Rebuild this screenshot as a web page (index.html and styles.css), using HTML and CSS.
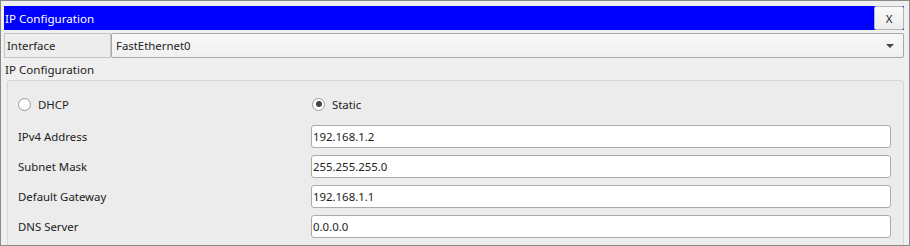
FILE: index.html
```html
<!DOCTYPE html>
<html>
<head>
<meta charset="utf-8">
<link rel="stylesheet" href="styles.css">
</head>
<body>
<div class="window">
  <div class="titlebar">
    <span class="title">IP Configuration</span>
    <button class="close">X</button>
  </div>
  <div class="iface-row">
    <div class="iface-label">Interface</div>
    <div class="select">
      <span>FastEthernet0</span>
      <span class="arrow"></span>
    </div>
  </div>
  <div class="section-label">IP Configuration</div>
  <div class="group">
    <div class="grid">
      <div class="radio-cell"><span class="radio"></span><span>DHCP</span></div>
      <div class="radio-cell static"><span class="radio checked"></span><span>Static</span></div>
      <div class="label">IPv4 Address</div>
      <div class="input">192.168.1.2</div>
      <div class="label">Subnet Mask</div>
      <div class="input">255.255.255.0</div>
      <div class="label">Default Gateway</div>
      <div class="input">192.168.1.1</div>
      <div class="label">DNS Server</div>
      <div class="input">0.0.0.0</div>
    </div>
  </div>
</div>
</body>
</html>
```
FILE: styles.css
```css
html, body {
  margin: 0;
  padding: 0;
  background: #efefef;
}
body {
  font-family: "Noto Sans", "Open Sans", sans-serif;
  font-size: 11.4px;
  color: #222;
}
.window {
  width: 910px;
  height: 246px;
  box-sizing: border-box;
  border: 1px solid #8a8a8a;
  padding: 5px 5px 0 3px;
  background: #efefef;
  overflow: hidden;
}
.titlebar {
  height: 24px;
  background: #0000ff;
  display: flex;
  align-items: center;
  justify-content: space-between;
}
.title {
  color: #fff;
  font-size: 11.6px;
  padding-left: 1px;
}
.close {
  width: 30px;
  height: 24px;
  margin: 0;
  padding: 0;
  border: 1px solid #b4b4b4;
  border-radius: 2px;
  background: linear-gradient(#fafafa, #ececec);
  font-family: "Noto Sans", sans-serif;
  font-size: 11.4px;
  color: #222;
}
.iface-row {
  display: flex;
  height: 25px;
  margin-top: 3px;
}
.iface-label {
  width: 107px;
  box-sizing: border-box;
  border: 1px solid #c4c4c4;
  display: flex;
  align-items: center;
  padding-left: 2px;
  background: #ededed;
}
.select {
  flex: 1;
  box-sizing: border-box;
  border: 1px solid #a8a8a8;
  border-radius: 2px;
  background: linear-gradient(#f8f8f8, #f0f0f0);
  display: flex;
  align-items: center;
  justify-content: space-between;
  padding: 0 9px 0 4px;
}
.arrow {
  width: 0;
  height: 0;
  border-left: 4px solid transparent;
  border-right: 4px solid transparent;
  border-top: 4px solid #444;
}
.section-label {
  height: 22px;
  display: flex;
  align-items: center;
  padding-left: 1px;
  font-size: 11.6px;
}
.group {
  margin-left: 3px;
  height: 200px;
  box-sizing: border-box;
  border: 1px solid #d6d6d6;
  border-radius: 3px;
  background: #ececec;
  padding: 11px 12px 0 10px;
}
.grid {
  display: grid;
  grid-template-columns: 293px 1fr;
  grid-template-rows: 26px repeat(4, 23px);
  row-gap: 7px;
}
.radio-cell {
  display: flex;
  align-items: center;
  gap: 7px;
  height: 24px;
}
.radio-cell.static {
  padding-left: 1px;
}
.radio {
  width: 13px;
  height: 13px;
  box-sizing: border-box;
  border: 1px solid #9a9a9a;
  border-radius: 50%;
  background: #fff;
  display: flex;
  align-items: center;
  justify-content: center;
}
.radio.checked::after {
  content: "";
  width: 6px;
  height: 6px;
  border-radius: 50%;
  background: #444;
}
.label {
  display: flex;
  align-items: center;
}
.input {
  box-sizing: border-box;
  border: 1px solid #ababab;
  border-radius: 3px;
  background: #fff;
  display: flex;
  align-items: center;
  padding-left: 1px;
}
```
